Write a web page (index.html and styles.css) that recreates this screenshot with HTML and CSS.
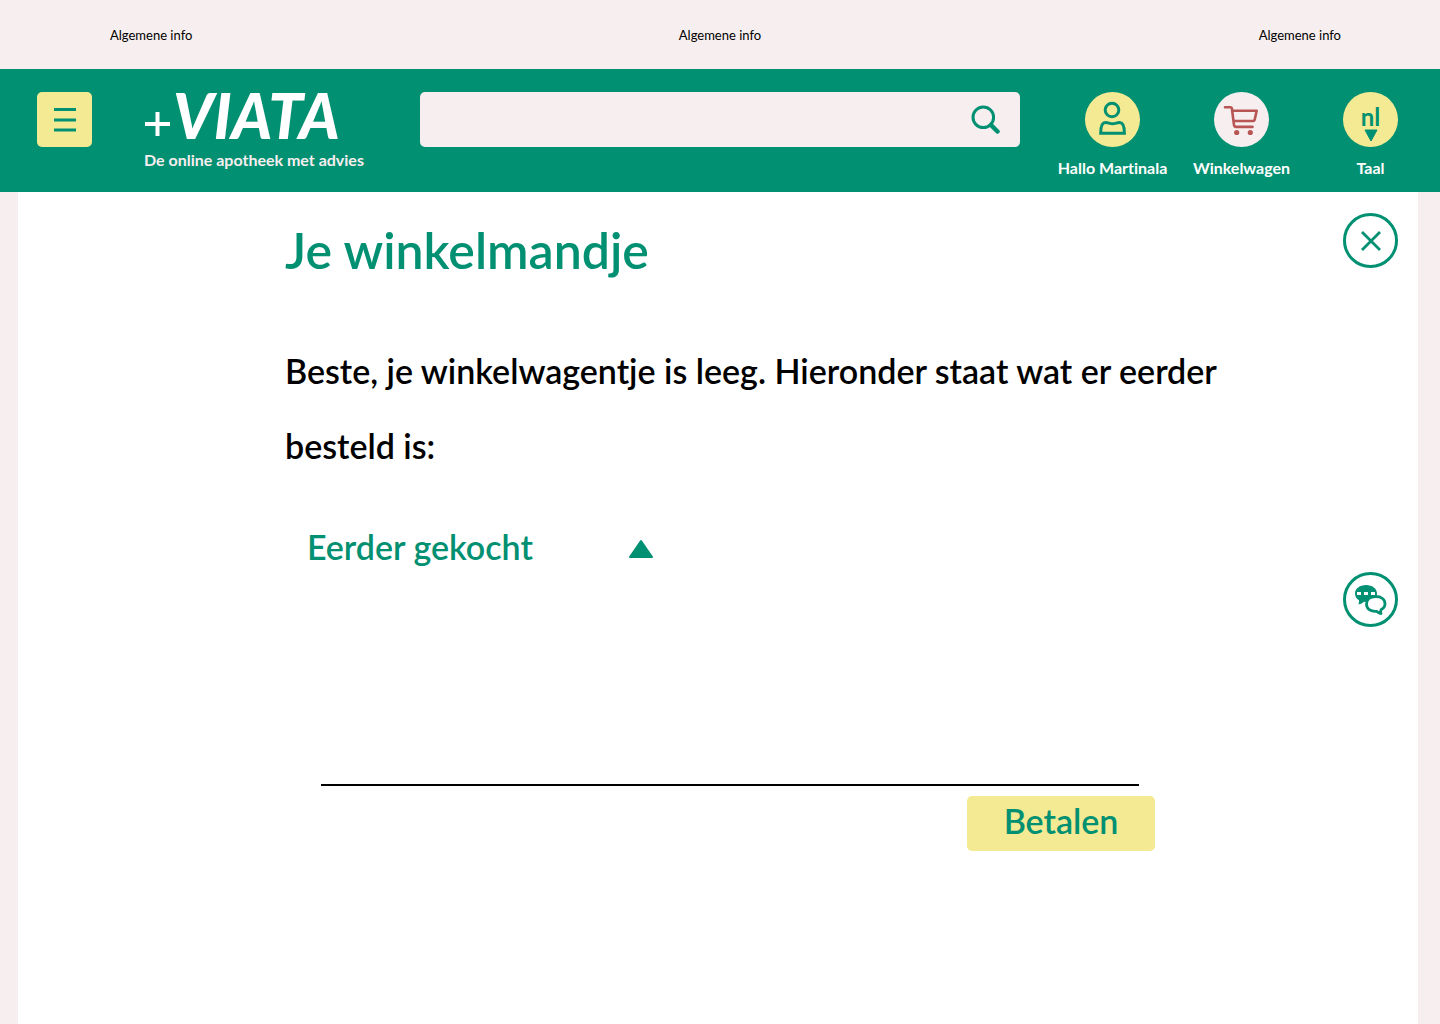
FILE: index.html
```html
<!DOCTYPE html>
<html lang="nl">
<head>
<meta charset="utf-8">
<meta name="viewport" content="width=device-width, initial-scale=1">
<title>Viata - Je winkelmandje</title>
<link rel="stylesheet" href="styles.css">
</head>
<body>
<nav class="topbar" aria-label="Informatie">
  <a href="#info">Algemene info</a>
  <a href="#info">Algemene info</a>
  <a href="#info">Algemene info</a>
</nav>
<header class="header">
  <button class="menu" type="button" aria-label="Menu">
    <svg width="55" height="55" viewBox="0 0 55 55"><path d="M17 17.500h22M17 28h22M17 38h22" stroke="currentColor" stroke-width="3"/></svg>
  </button>
  <a class="brand" href="#home">
    <span class="logo"><svg width="26" height="25" viewBox="0 0 26 25" aria-hidden="true"><path d="M1 13h25M13.500 1v24" stroke="currentColor" stroke-width="4"/></svg><span class="wordmark">VIATA</span></span>
    <span class="tagline">De online apotheek met advies</span>
  </a>
  <form class="search" role="search">
    <input type="search" aria-label="Zoeken">
    <button type="submit" aria-label="Zoek">
      <svg width="30" height="30" viewBox="0 0 30 30" fill="none" stroke="currentColor"><circle cx="13.300" cy="12.300" r="10.300" stroke-width="3"/><path d="M21 20l6.500 6.500" stroke-width="4.500" stroke-linecap="round"/></svg>
    </button>
  </form>
  <nav class="actions" aria-label="Account">
    <a class="action" href="#account">
      <span class="disc"><svg width="55" height="55" viewBox="0 0 55 55" fill="none" stroke="currentColor" stroke-width="3"><circle cx="27" cy="18" r="6.800"/><path d="M15.700 41.300C15.700 35 16.500 30.500 20.500 30.500C23.500 30.500 24.500 31.800 27.500 31.800S32 30.500 34.500 30.500C38.500 30.500 39.400 35 39.400 41.300z"/></svg></span>
      <span>Hallo Martinala</span>
    </a>
    <a class="action" href="#winkelwagen">
      <span class="disc disc-cart"><svg width="55" height="55" viewBox="0 0 55 55" fill="none" stroke="currentColor" stroke-width="2.600" stroke-linecap="round" stroke-linejoin="round"><path d="M11 15.300h5.500q1.200 0 1.400 1.200L20 33q.4 1.900 2 1.900h16.500M18.200 18.700h24.500L40.600 28q-.3 1-1.300 1H19.700"/><circle cx="22.700" cy="40.500" r="2.600" fill="currentColor" stroke="none"/><circle cx="36.300" cy="40.500" r="2.600" fill="currentColor" stroke="none"/></svg></span>
      <span>Winkelwagen</span>
    </a>
    <button class="action" type="button">
      <span class="disc disc-lang"><span>nl</span><svg width="14" height="13" viewBox="0 0 14 13"><path d="M1 1h12L7 12z" fill="currentColor" stroke="currentColor" stroke-linejoin="round"/></svg></span>
      <span>Taal</span>
    </button>
  </nav>
</header>
<main class="page">
  <section class="cart">
    <h1>Je winkelmandje</h1>
    <p>Beste, je winkelwagentje is leeg. Hieronder staat wat er eerder besteld is:</p>
    <button class="toggle" type="button" aria-expanded="false">Eerder gekocht
      <svg width="24" height="26" viewBox="0 0 24 26"><path d="M12 7L23 23H1z" fill="currentColor" stroke="currentColor" stroke-width="2" stroke-linejoin="round"/></svg>
    </button>
    <hr>
    <button class="pay" type="button">Betalen</button>
  </section>
  <aside class="tools">
    <button class="round" type="button" aria-label="Sluiten">
      <svg width="20" height="20" viewBox="0 0 20 20"><path d="M1 1l18 18M19 1L1 19" stroke="currentColor" stroke-width="2.800"/></svg>
    </button>
    <button class="round" type="button" aria-label="Chat">
      <svg width="34" height="34" viewBox="0 0 34 34"><path d="M12 2C6 2 1 5.500 1 10.500C1 13.500 2.500 15.700 5 17.200Q5.200 19.500 4.500 21.500Q8 20.800 10 18.800C17.500 19.500 23 16 23 10.500C23 5.500 18 2 12 2z" fill="currentColor"/><path d="M3 9h4v3h-4zM10 9h4v3h-4zM17 9h4v3h-4z" fill="#fff"/><path d="M21.500 13.500C16 13.500 12.500 16.500 12.500 21C12.500 25.800 16.500 28.700 22.500 28.300Q24.500 30.300 27 30.500Q26.200 28.500 27 26.700C29.700 25.300 31 23.300 31 20.800C31 16.500 27.500 13.500 21.500 13.500z" fill="#fff" stroke="currentColor" stroke-width="2.800" stroke-linejoin="round"/></svg>
    </button>
  </aside>
</main>
</body>
</html>
```
FILE: styles.css
```css
:root {
  --green: #029072;
  --yellow: #f4ea93;
  --blush: #f7eeef;
}

* { box-sizing: border-box; }

body {
  margin: 0;
  min-height: 100vh;
  display: flex;
  flex-direction: column;
  background: var(--blush);
  color: #000;
  font-family: Lato, "Open Sans", sans-serif;
  font-variant-ligatures: none;
}

a { color: inherit; text-decoration: none; }

button {
  padding: 0;
  border: 0;
  background: none;
  color: inherit;
  font: inherit;
  cursor: pointer;
}

svg { display: block; flex: none; }

.topbar {
  display: grid;
  grid-template-columns: 1fr auto 1fr;
  align-items: center;
  height: 69px;
  font-size: 13px;
  line-height: 16px;
}

.topbar a:first-child { padding-left: 110px; }
.topbar a:last-child { padding-right: 99px; justify-self: end; }

.header {
  display: flex;
  align-items: flex-start;
  min-height: 123px;
  padding: 23px 5px 0 37px;
  background: var(--green);
  color: #fff;
}

.menu {
  border-radius: 5px;
  background: var(--yellow);
  color: var(--green);
}

.brand {
  display: flex;
  flex-direction: column;
  width: 276px;
  margin-left: 52px;
}

.logo {
  display: flex;
  align-items: flex-end;
  gap: 3px;
  height: 46px;
}

.logo svg { margin-bottom: 2px; }

.wordmark {
  font-size: 62px;
  font-style: italic;
  font-weight: 900;
  line-height: 46px;
}

.tagline {
  margin-top: 12px;
  color: var(--blush);
  font-size: 16px;
  font-weight: 700;
  line-height: 20px;
}

.search {
  display: flex;
  align-items: center;
  flex: 1;
  height: 55px;
  padding-right: 20px;
  border-radius: 5px;
  background: var(--blush);
  color: var(--green);
}

.search input {
  flex: 1;
  min-width: 0;
  height: 100%;
  padding: 0 20px;
  border: 0;
  outline: 0;
  background: none;
  font: inherit;
  font-size: 20px;
}

.actions {
  display: grid;
  grid-template-columns: repeat(3, 129px);
  margin-left: 28px;
}

.action {
  display: flex;
  flex-direction: column;
  align-items: center;
  gap: 11px;
  font-size: 16px;
  font-weight: 700;
  line-height: 20px;
}

.disc {
  display: flex;
  flex-direction: column;
  align-items: center;
  width: 55px;
  height: 55px;
  border-radius: 50%;
  background: var(--yellow);
  color: var(--green);
}

.disc-cart { background: var(--blush); color: #b85555; }

.disc-lang {
  padding-top: 13px;
  font-size: 24px;
  line-height: 24px;
}

.page {
  display: flex;
  justify-content: space-between;
  flex: 1;
  margin: 0 22px 0 18px;
  padding: 21px 20px 0 267px;
  background: #fff;
}

.cart {
  display: flex;
  flex-direction: column;
  width: 940px;
}

.cart h1 {
  margin: 7px 0 0;
  color: var(--green);
  font-size: 50px;
  font-weight: 600;
  line-height: 60px;
}

.cart p {
  margin: 53px 0 0;
  font-size: 34px;
  font-weight: 600;
  line-height: 75px;
}

.toggle {
  display: flex;
  align-items: center;
  justify-content: space-between;
  width: 346px;
  margin: 44px 0 0 22px;
  color: var(--green);
  font-size: 34px;
  font-weight: 600;
  line-height: 40px;
}

.cart hr {
  width: 818px;
  margin: 217px 0 0 36px;
  border: 0;
  border-top: 2px solid #000;
}

.pay {
  align-self: flex-end;
  width: 188px;
  height: 55px;
  margin: 10px 70px 0 0;
  padding-bottom: 6px;
  border-radius: 5px;
  background: var(--yellow);
  color: var(--green);
  font-size: 34px;
  font-weight: 600;
}

.tools {
  display: flex;
  flex-direction: column;
  gap: 304px;
}

.round {
  display: flex;
  align-items: center;
  justify-content: center;
  width: 55px;
  height: 55px;
  border: 3px solid var(--green);
  border-radius: 50%;
  color: var(--green);
}
```
